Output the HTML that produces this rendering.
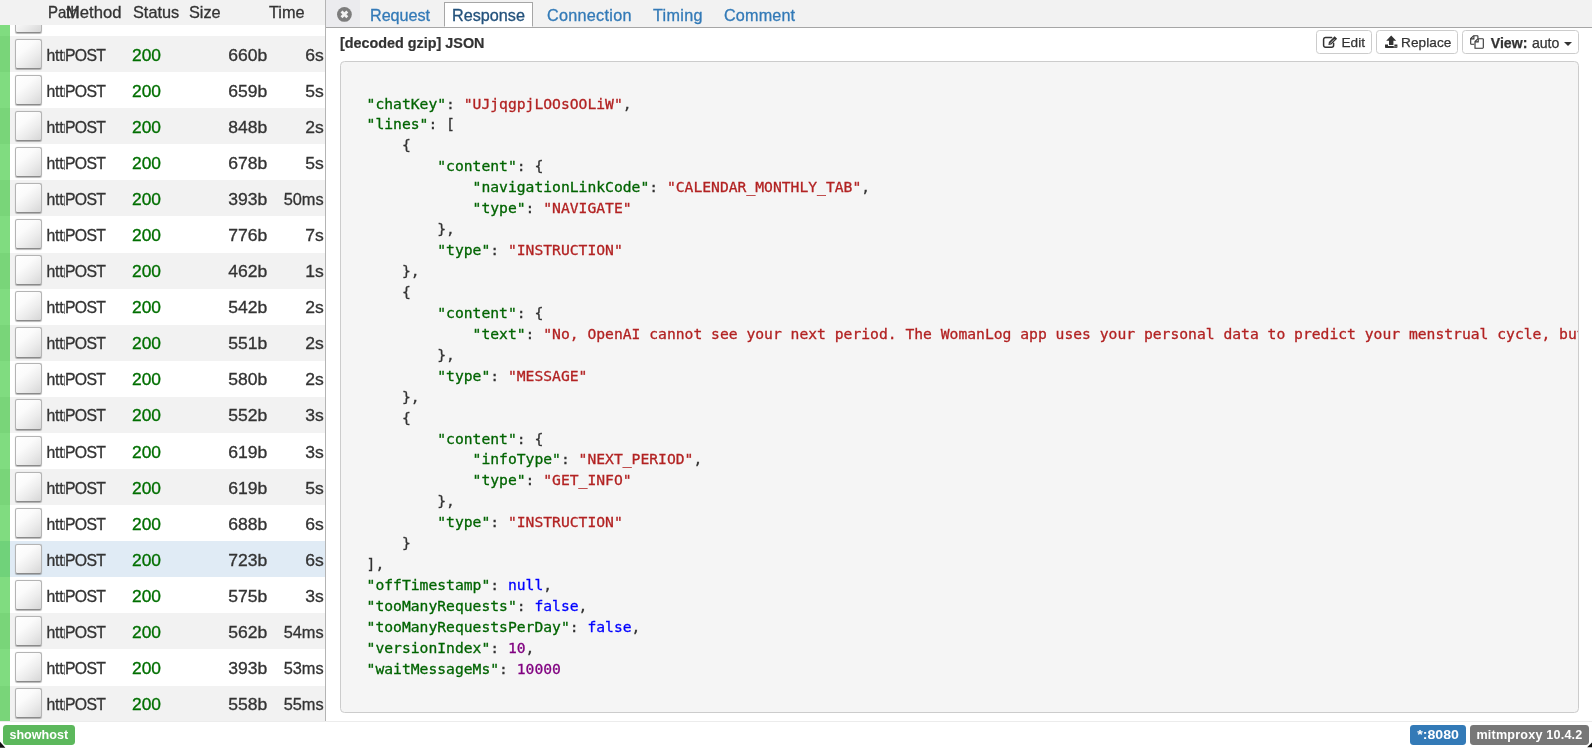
<!DOCTYPE html>
<html lang="en"><head><meta charset="utf-8"><title>mitmproxy</title>
<style>
html,body{margin:0;padding:0;}
body{width:1595px;height:751px;overflow:hidden;background:#fff;position:relative;font-family:"Liberation Sans",sans-serif;color:#333;}
#left{position:absolute;left:0;top:0;width:325px;height:721px;overflow:hidden;background:#fff;}
#thead{position:absolute;left:0;top:0;width:325px;height:25px;background:#f2f2f2;z-index:3;font-size:15.7px;color:#333;}
#thead span{-webkit-text-stroke:0.3px currentColor;transform:scaleX(1.038);transform-origin:0 50%;position:absolute;top:2.3px;line-height:21px;white-space:nowrap;}
.row{position:absolute;left:0;width:325px;height:37.2px;font-size:15.8px;background:#fff;}
.row.even{background:#f2f2f2;}
.row.sel{background:#e0ebf5;}
.row .tls{position:absolute;left:0;top:0;width:10px;height:100%;background:#80dc80;}
.row.even .tls{background:#79d579;}
.row.sel .tls{background:#70d27a;}
.row .ico{position:absolute;left:15px;top:2.6px;width:27px;height:30.2px;border-radius:2.5px;box-sizing:border-box;
  border:1px solid #b4b4b4;border-bottom:1.6px solid #8a8a8a;
  background:linear-gradient(140deg,#ffffff 0%,#fbfbfb 35%,#ececec 65%,#d6d6d6 100%);
  box-shadow:0 0.8px 0.8px rgba(0,0,0,.28);}
.row span{-webkit-text-stroke:0.3px currentColor;position:absolute;top:0.6px;line-height:37.5px;white-space:nowrap;}
.row .path{left:46.5px;width:18px;height:24.6px;overflow:hidden;letter-spacing:-0.2px;}
.row .path i{font-style:normal;}
.row .meth{left:65px;letter-spacing:-0.7px;}
.row .stat{left:132px;color:#006f00;transform:scaleX(1.10);transform-origin:0 50%;}
.row .size{right:58px;text-align:right;transform:scaleX(1.11);transform-origin:100% 50%;}
.row .time{right:1.5px;text-align:right;transform:scaleX(1.11);transform-origin:100% 50%;}
#split{position:absolute;left:325px;top:0;width:1px;height:721px;background:#b4b4b4;}
#nav{position:absolute;left:326px;top:0;width:1266px;height:27px;background:#f2f2f2;border-bottom:1px solid #a6a6a6;font-size:15.7px;}
#nav a b{font-weight:normal;display:inline-block;transform:translateY(0.8px) scaleX(1.032);transform-origin:0 50%;}
#nav .close{position:absolute;left:0;top:0;width:34px;height:27px;background:#ebebee;}
#nav a{-webkit-text-stroke:0.3px currentColor;position:absolute;top:2px;height:25px;line-height:24px;color:#337ab7;text-decoration:none;border:1px solid transparent;box-sizing:border-box;padding:0 8px;white-space:nowrap;}
#nav a.active{background:#fff;border-color:#a6a6a6;border-bottom-color:#fff;height:25px;color:#23527c;}
#hdr{position:absolute;left:339.8px;top:33.8px;font-size:14px;transform:translateY(-0.5px) scaleX(1.026);transform-origin:0 50%;-webkit-text-stroke:0.2px currentColor;font-weight:bold;line-height:18px;color:#333;white-space:nowrap;}
.btn{position:absolute;top:30px;height:24px;box-sizing:border-box;border:1px solid #ccc;border-radius:3.5px;background:#fff;font-size:13.6px;line-height:22px;color:#333;white-space:nowrap;}
.btn span{position:absolute;top:0.8px;-webkit-text-stroke:0.25px currentColor;}
#pre{position:absolute;left:340px;top:61px;width:1239px;height:652px;box-sizing:border-box;border:1px solid #ccc;border-radius:4.5px;background:#f5f5f5;overflow:hidden;}
#pre pre{-webkit-text-stroke:0.3px currentColor;margin:0;position:absolute;left:25.6px;top:10.6px;font-family:"DejaVu Sans Mono","Liberation Mono",monospace;font-size:14.68px;line-height:20.94px;color:#333;white-space:pre;}
.k{color:#006400;} .s{color:#b22222;} .n{color:#800080;} .b{color:#0000ff;}
#footer{position:absolute;left:0;top:720.6px;width:1592px;height:31px;background:#fff;border-top:1px solid #ececec;box-sizing:border-box;}
.label{position:absolute;top:3.2px;height:20.4px;line-height:21.4px;border-radius:3.4px;color:#fff;font-weight:bold;font-size:12px;text-align:center;white-space:nowrap;}
#app{position:absolute;left:0;top:0;width:1595px;height:751px;will-change:transform;}
</style></head><body><div id="app">
<div id="left">
<div id="thead"><span style="left:47.5px;transform:scaleX(0.955)">Path</span><span style="left:66.2px;transform:scaleX(1.06)">Method</span><span style="left:133px">Status</span><span style="left:189px">Size</span><span style="left:269px">Time</span></div>
<div class="row" style="top:0.00px"><i class="tls"></i><i class="ico"></i></div>
<div class="row even" style="top:36.08px"><i class="tls"></i><i class="ico"></i><span class="path">htt<i>ps:</i></span><span class="meth">POST</span><span class="stat">200</span><span class="size">660b</span><span class="time">6s</span></div>
<div class="row " style="top:72.16px"><i class="tls"></i><i class="ico"></i><span class="path">htt<i>ps:</i></span><span class="meth">POST</span><span class="stat">200</span><span class="size">659b</span><span class="time">5s</span></div>
<div class="row even" style="top:108.24px"><i class="tls"></i><i class="ico"></i><span class="path">htt<i>ps:</i></span><span class="meth">POST</span><span class="stat">200</span><span class="size">848b</span><span class="time">2s</span></div>
<div class="row " style="top:144.32px"><i class="tls"></i><i class="ico"></i><span class="path">htt<i>ps:</i></span><span class="meth">POST</span><span class="stat">200</span><span class="size">678b</span><span class="time">5s</span></div>
<div class="row even" style="top:180.40px"><i class="tls"></i><i class="ico"></i><span class="path">htt<i>ps:</i></span><span class="meth">POST</span><span class="stat">200</span><span class="size">393b</span><span class="time" style="transform:scaleX(1.035)">50ms</span></div>
<div class="row " style="top:216.48px"><i class="tls"></i><i class="ico"></i><span class="path">htt<i>ps:</i></span><span class="meth">POST</span><span class="stat">200</span><span class="size">776b</span><span class="time">7s</span></div>
<div class="row even" style="top:252.56px"><i class="tls"></i><i class="ico"></i><span class="path">htt<i>ps:</i></span><span class="meth">POST</span><span class="stat">200</span><span class="size">462b</span><span class="time">1s</span></div>
<div class="row " style="top:288.64px"><i class="tls"></i><i class="ico"></i><span class="path">htt<i>ps:</i></span><span class="meth">POST</span><span class="stat">200</span><span class="size">542b</span><span class="time">2s</span></div>
<div class="row even" style="top:324.72px"><i class="tls"></i><i class="ico"></i><span class="path">htt<i>ps:</i></span><span class="meth">POST</span><span class="stat">200</span><span class="size">551b</span><span class="time">2s</span></div>
<div class="row " style="top:360.80px"><i class="tls"></i><i class="ico"></i><span class="path">htt<i>ps:</i></span><span class="meth">POST</span><span class="stat">200</span><span class="size">580b</span><span class="time">2s</span></div>
<div class="row even" style="top:396.88px"><i class="tls"></i><i class="ico"></i><span class="path">htt<i>ps:</i></span><span class="meth">POST</span><span class="stat">200</span><span class="size">552b</span><span class="time">3s</span></div>
<div class="row " style="top:432.96px"><i class="tls"></i><i class="ico"></i><span class="path">htt<i>ps:</i></span><span class="meth">POST</span><span class="stat">200</span><span class="size">619b</span><span class="time">3s</span></div>
<div class="row even" style="top:469.04px"><i class="tls"></i><i class="ico"></i><span class="path">htt<i>ps:</i></span><span class="meth">POST</span><span class="stat">200</span><span class="size">619b</span><span class="time">5s</span></div>
<div class="row " style="top:505.12px"><i class="tls"></i><i class="ico"></i><span class="path">htt<i>ps:</i></span><span class="meth">POST</span><span class="stat">200</span><span class="size">688b</span><span class="time">6s</span></div>
<div class="row sel" style="top:541.20px"><i class="tls"></i><i class="ico"></i><span class="path">htt<i>ps:</i></span><span class="meth">POST</span><span class="stat">200</span><span class="size">723b</span><span class="time">6s</span></div>
<div class="row " style="top:577.28px"><i class="tls"></i><i class="ico"></i><span class="path">htt<i>ps:</i></span><span class="meth">POST</span><span class="stat">200</span><span class="size">575b</span><span class="time">3s</span></div>
<div class="row even" style="top:613.36px"><i class="tls"></i><i class="ico"></i><span class="path">htt<i>ps:</i></span><span class="meth">POST</span><span class="stat">200</span><span class="size">562b</span><span class="time" style="transform:scaleX(1.035)">54ms</span></div>
<div class="row " style="top:649.44px"><i class="tls"></i><i class="ico"></i><span class="path">htt<i>ps:</i></span><span class="meth">POST</span><span class="stat">200</span><span class="size">393b</span><span class="time" style="transform:scaleX(1.035)">53ms</span></div>
<div class="row even" style="top:685.52px"><i class="tls"></i><i class="ico"></i><span class="path">htt<i>ps:</i></span><span class="meth">POST</span><span class="stat">200</span><span class="size">558b</span><span class="time" style="transform:scaleX(1.035)">55ms</span></div>
</div>
<div id="split"></div>
<div id="nav"><div class="close"><svg width="34" height="27" viewBox="0 0 34 27"><circle cx="18.4" cy="14.4" r="7.4" fill="#7d7d7d"/><path d="M15.5 11.5 L21.3 17.3 M21.3 11.5 L15.5 17.3" stroke="#f2f2f2" stroke-width="2.8" stroke-linecap="butt"/></svg></div>
<a style="left:35px;letter-spacing:-0.06px"><b>Request</b></a><a class="active" style="left:118px;width:89px;padding:0 7px"><b>Response</b></a><a style="left:211.6px;letter-spacing:.27px"><b>Connection</b></a><a style="left:318px;letter-spacing:.3px"><b>Timing</b></a><a style="left:389px;letter-spacing:.15px"><b>Comment</b></a></div>
<div id="hdr">[decoded gzip] JSON</div>
<div class="btn" style="left:1316px;width:56px"><svg style="position:absolute;left:4.5px;top:3.8px" width="17" height="15" viewBox="0 0 17 15"><path d="M9.6 2.4 H3.6 A2 2 0 0 0 1.6 4.4 V10.2 A2 2 0 0 0 3.6 12.2 H9.6 A2 2 0 0 0 11.6 10.2 V8.2" fill="none" stroke="#333" stroke-width="1.5" stroke-linecap="round"/><path d="M12.6 1.2 L15.1 3.7 L9.3 9.5 L6.4 10 L6.9 7.1 Z" fill="#333"/><path d="M8.1 8.6 L12.4 4.3" stroke="#fff" stroke-width="0.7"/></svg><span style="left:24.5px">Edit</span></div>
<div class="btn" style="left:1376px;width:81.6px"><svg style="position:absolute;left:7px;top:4px" width="16" height="15" viewBox="0 0 16 15"><path d="M7.2 0.6 L12.2 5.8 H9.4 V10 H5 V5.8 H2.2 Z" fill="#333"/><path d="M1 9.6 H4 V11 H10.4 V9.6 H13.4 V12.3 A0.8 0.8 0 0 1 12.6 13.1 H1.8 A0.8 0.8 0 0 1 1 12.3 Z" fill="#333"/><rect x="9.6" y="11.5" width="1.2" height="0.8" fill="#fff"/><rect x="11.4" y="11.5" width="1.2" height="0.8" fill="#fff"/></svg><span style="left:24px;letter-spacing:.08px">Replace</span></div>
<div class="btn" style="left:1462px;width:117px"><svg style="position:absolute;left:5.8px;top:2.8px" width="17" height="16" viewBox="0 0 17 16"><path d="M5.2 10.2 H2.3 A0.6 0.6 0 0 1 1.7 9.6 V4.6 L4.6 1.7 H8.3 A0.6 0.6 0 0 1 8.9 2.3 V4.6" fill="none" stroke="#333" stroke-width="1.1"/><path d="M1.9 4.9 H4.9 V1.9" fill="none" stroke="#333" stroke-width="1.1"/><path d="M6 14.2 V7.6 L8.9 4.7 H13.7 A0.6 0.6 0 0 1 14.3 5.3 V13.6 A0.6 0.6 0 0 1 13.7 14.2 Z" fill="none" stroke="#333" stroke-width="1.1"/><path d="M6.2 7.9 H9.2 V4.9" fill="none" stroke="#333" stroke-width="1.1"/></svg><span style="left:27.8px;font-size:14.1px;word-spacing:0.6px"><b>View:</b> auto</span><i style="position:absolute;left:101.3px;top:11px;width:0;height:0;border-left:4.2px solid transparent;border-right:4.2px solid transparent;border-top:4.6px solid #333"></i></div>
<div id="pre"><pre>

<span class="k">"chatKey"</span>: <span class="s">"UJjqgpjLOOsOOLiW"</span>,
<span class="k">"lines"</span>: [
    {
        <span class="k">"content"</span>: {
            <span class="k">"navigationLinkCode"</span>: <span class="s">"CALENDAR_MONTHLY_TAB"</span>,
            <span class="k">"type"</span>: <span class="s">"NAVIGATE"</span>
        },
        <span class="k">"type"</span>: <span class="s">"INSTRUCTION"</span>
    },
    {
        <span class="k">"content"</span>: {
            <span class="k">"text"</span>: <span class="s">"No, OpenAI cannot see your next period. The WomanLog app uses your personal data to predict your menstrual cycle, but it is stored securely and never shared."</span>
        },
        <span class="k">"type"</span>: <span class="s">"MESSAGE"</span>
    },
    {
        <span class="k">"content"</span>: {
            <span class="k">"infoType"</span>: <span class="s">"NEXT_PERIOD"</span>,
            <span class="k">"type"</span>: <span class="s">"GET_INFO"</span>
        },
        <span class="k">"type"</span>: <span class="s">"INSTRUCTION"</span>
    }
],
<span class="k">"offTimestamp"</span>: <span class="b">null</span>,
<span class="k">"tooManyRequests"</span>: <span class="b">false</span>,
<span class="k">"tooManyRequestsPerDay"</span>: <span class="b">false</span>,
<span class="k">"versionIndex"</span>: <span class="n">10</span>,
<span class="k">"waitMessageMs"</span>: <span class="n">10000</span></pre></div>
<div id="footer">
<span class="label" style="left:2.6px;width:72.4px;background:#5cb85c;font-size:12.6px">showhost</span>
<span class="label" style="left:1409.5px;width:56.5px;background:#337ab7;font-size:12.3px"><b style="display:inline-block;transform:scaleX(1.15)">*:8080</b></span>
<span class="label" style="left:1469.7px;width:119.6px;background:#777;font-size:12.6px;letter-spacing:.2px">mitmproxy 10.4.2</span>
<svg style="position:absolute;left:0;top:19.4px" width="6" height="7" viewBox="0 0 6 7"><path d="M0 0.8 L5.4 6.7 H0 Z" fill="#111"/></svg>
<svg style="position:absolute;left:1586px;top:19.4px" width="6" height="7" viewBox="0 0 6 7"><path d="M6 1.6 V6.3 H1.2 Z" fill="#111"/></svg>
</div>
</div></body></html>
